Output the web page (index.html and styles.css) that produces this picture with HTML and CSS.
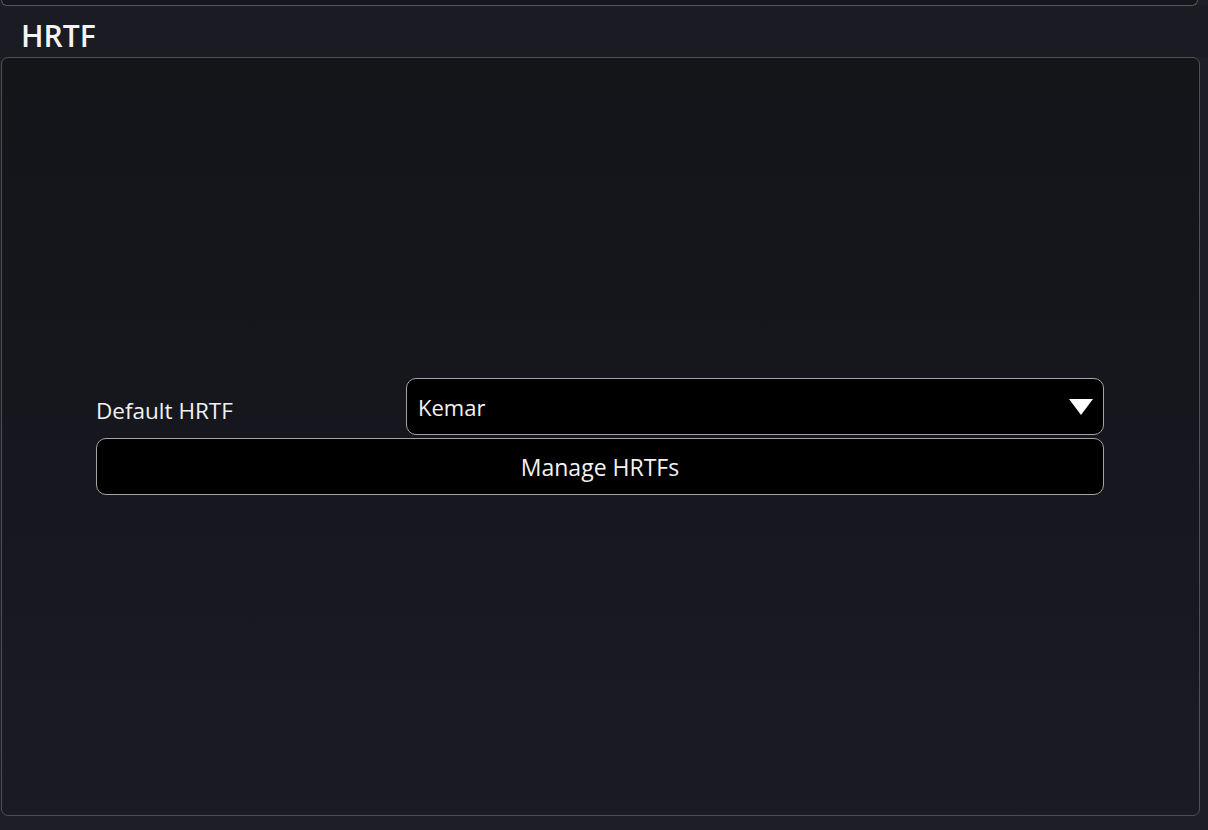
FILE: index.html
```html
<!DOCTYPE html>
<html lang="en">
<head>
<meta charset="utf-8">
<title>HRTF</title>
<link rel="stylesheet" href="styles.css">
</head>
<body>
  <div class="prev-panel"></div>
  <h2 class="section-title">HRTF</h2>
  <section class="panel">
    <div class="settings">
      <div class="row">
        <label class="row-label">Default HRTF</label>
        <div class="select">
          <span class="select-value">Kemar</span>
          <svg class="select-arrow" width="24" height="16" viewBox="0 0 24 16" aria-hidden="true">
            <polygon points="0,0 24,0 12,16" fill="#ffffff"/>
          </svg>
        </div>
      </div>
      <button class="wide-button">Manage HRTFs</button>
    </div>
  </section>
</body>
</html>
```

FILE: styles.css
```css
html, body {
  margin: 0;
  padding: 0;
}

body {
  width: 1208px;
  height: 830px;
  overflow: hidden;
  background: #1d1e27;
  font-family: "Open Sans", "Noto Sans", sans-serif;
  color: #f2f2f2;
}

.prev-panel {
  height: 5px;
  margin: 0 10px 0 1px;
  border: 1px solid #55565c;
  border-top: none;
  border-radius: 0 0 6px 6px;
  background: #15161b;
}

.section-title {
  margin: 0;
  height: 51px;
  padding: 10px 0 0 21px;
  box-sizing: border-box;
  font-size: 30px;
  line-height: 40px;
  font-weight: 600;
  color: #f4f4f4;
  background: #1a1b23;
}

.panel {
  height: 759px;
  margin: 0 8px 0 1px;
  box-sizing: border-box;
  border: 1px solid #4f5056;
  border-radius: 7px;
  background: linear-gradient(180deg, #141519 0%, #16171d 45%, #1a1b23 100%);
  display: flex;
  align-items: center;
  justify-content: center;
}

.settings {
  width: 1008px;
  margin-right: 1px;
  display: flex;
  flex-direction: column;
  gap: 3px;
}

.row {
  display: grid;
  grid-template-columns: 310px 1fr;
  height: 57px;
}

.row-label {
  align-self: center;
  padding-top: 8px;
  font-size: 22.5px;
  line-height: 30px;
}

.select {
  display: flex;
  align-items: center;
  justify-content: space-between;
  box-sizing: border-box;
  height: 57px;
  border: 1.5px solid #a3a3a3;
  border-radius: 10px;
  background: #000;
  padding: 0 10px 0 11px;
}

.select-value {
  font-size: 22px;
  line-height: 30px;
}

.select-arrow {
  display: block;
}

.wide-button {
  display: block;
  width: 100%;
  height: 57px;
  box-sizing: border-box;
  border: 1.5px solid #a3a3a3;
  border-radius: 10px;
  background: #000;
  color: #f2f2f2;
  font-family: "Open Sans", "Noto Sans", sans-serif;
  font-size: 23px;
  line-height: 30px;
  padding: 0;
}
```
